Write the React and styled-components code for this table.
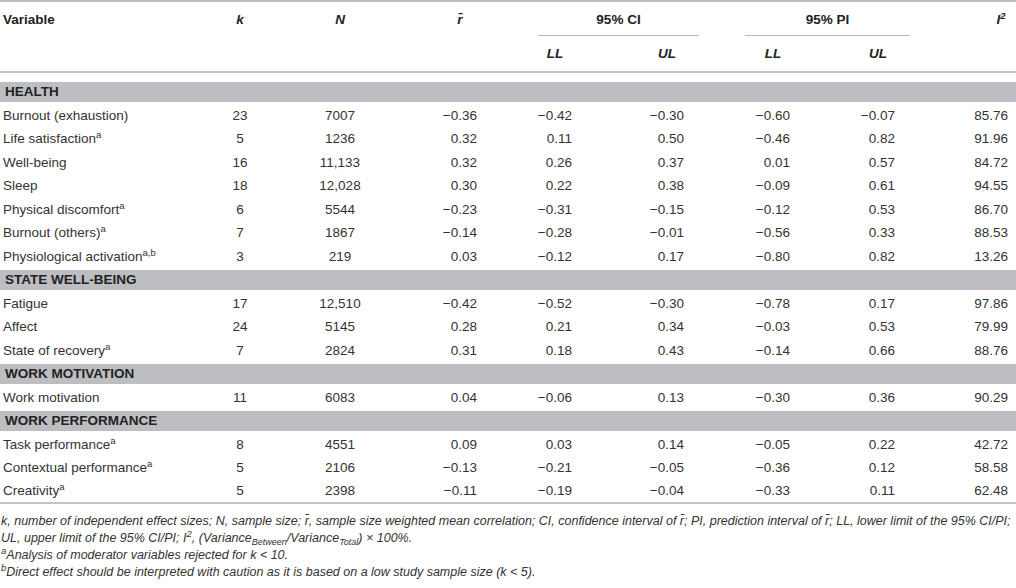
import { Fragment } from 'react';
import styled, { createGlobalStyle } from 'styled-components';

const GlobalStyle = createGlobalStyle`
  body {
    margin: 0;
    background: #fff;
    font-family: "Liberation Sans", Arial, sans-serif;
    color: #333;
  }
`;

const Page = styled.div`
  width: 1016px;
`;

const Table = styled.table`
  width: 1016px;
  table-layout: fixed;
  border-collapse: collapse;
  font-size: 13.5px;
`;

const HeadRow = styled.tr`
  border-top: ${(p) => (p.$top ? '2px solid #bcbcbc' : 'none')};
  border-bottom: ${(p) => (p.$bottom ? '2px solid #c4c4c4' : 'none')};
  height: ${(p) => p.$h}px;
`;

const Th = styled.th`
  padding: 0;
  padding-left: ${(p) => (p.$align === 'left' ? '3px' : '0')};
  padding-right: ${(p) => p.$pr || 0}px;
  text-align: ${(p) => p.$align || 'center'};
  vertical-align: ${(p) => p.$valign || 'middle'};
  font-weight: bold;
  font-size: 13.5px;
  color: #222;
`;

const HeadLabel = styled.span`
  display: inline-block;
  width: ${(p) => p.$w || 34}px;
  text-align: center;
  font-style: italic;
`;

// "95% CI" / "95% PI" with the short rule under it
const SpanLabel = styled.div`
  margin: 0 23px;
  padding: 10px 0 8px;
  border-bottom: 1px solid #b8b8b8;
  font-weight: bold;
`;

const Row = styled.tr`
  height: 23.5px;
  border-bottom: ${(p) => (p.$last ? '2px solid #c4c4c4' : 'none')};
`;

const Cell = styled.td`
  padding: 0 ${(p) => p.$pr || 0}px 0 ${(p) => p.$pl || 0}px;
  text-align: ${(p) => p.$align || 'right'};
  white-space: nowrap;
  color: #333;
`;

const BandCell = styled.td`
  padding: ${(p) => (p.$first ? '9px' : '2px')} 0 1.5px;
`;

const Band = styled.div`
  background: #bdbec1;
  height: 20px;
  line-height: 20px;
  padding-left: 5px;
  font-weight: bold;
  font-size: 13.5px;
  color: #222;
`;

const Sup = styled.sup`
  font-size: 9.5px;
  line-height: 0;
  vertical-align: 5px;
`;

const Sub = styled.sub`
  font-size: 9px;
  line-height: 0;
  vertical-align: -3px;
`;

const Notes = styled.div`
  padding: 9px 0 0 1px;
  font-style: italic;
  font-size: 12.5px;
  line-height: 17px;
  color: #333;
`;

const NoteLine = styled.div`
  white-space: nowrap;
`;

const rbar = 'r\u0304';

const sections = [
  {
    title: 'HEALTH',
    rows: [
      ['Burnout (exhaustion)', '', '23', '7007', '−0.36', '−0.42', '−0.30', '−0.60', '−0.07', '85.76'],
      ['Life satisfaction', 'a', '5', '1236', '0.32', '0.11', '0.50', '−0.46', '0.82', '91.96'],
      ['Well-being', '', '16', '11,133', '0.32', '0.26', '0.37', '0.01', '0.57', '84.72'],
      ['Sleep', '', '18', '12,028', '0.30', '0.22', '0.38', '−0.09', '0.61', '94.55'],
      ['Physical discomfort', 'a', '6', '5544', '−0.23', '−0.31', '−0.15', '−0.12', '0.53', '86.70'],
      ['Burnout (others)', 'a', '7', '1867', '−0.14', '−0.28', '−0.01', '−0.56', '0.33', '88.53'],
      ['Physiological activation', 'a,b', '3', '219', '0.03', '−0.12', '0.17', '−0.80', '0.82', '13.26'],
    ],
  },
  {
    title: 'STATE WELL-BEING',
    rows: [
      ['Fatigue', '', '17', '12,510', '−0.42', '−0.52', '−0.30', '−0.78', '0.17', '97.86'],
      ['Affect', '', '24', '5145', '0.28', '0.21', '0.34', '−0.03', '0.53', '79.99'],
      ['State of recovery', 'a', '7', '2824', '0.31', '0.18', '0.43', '−0.14', '0.66', '88.76'],
    ],
  },
  {
    title: 'WORK MOTIVATION',
    rows: [['Work motivation', '', '11', '6083', '0.04', '−0.06', '0.13', '−0.30', '0.36', '90.29']],
  },
  {
    title: 'WORK PERFORMANCE',
    rows: [
      ['Task performance', 'a', '8', '4551', '0.09', '0.03', '0.14', '−0.05', '0.22', '42.72'],
      ['Contextual performance', 'a', '5', '2106', '−0.13', '−0.21', '−0.05', '−0.36', '0.12', '58.58'],
      ['Creativity', 'a', '5', '2398', '−0.11', '−0.19', '−0.04', '−0.33', '0.11', '62.48'],
    ],
  },
];

const NUM_PAD = 38;

function DataRow({ row, last }) {
  const [name, sup, k, n, r, ciL, ciU, piL, piU, i2] = row;
  return (
    <Row $last={last}>
      <Cell $align="left" $pl={3}>
        {name}
        {sup && <Sup>{sup}</Sup>}
      </Cell>
      <Cell $align="center">{k}</Cell>
      <Cell $align="center">{n}</Cell>
      <Cell $pr={NUM_PAD}>{r}</Cell>
      <Cell $pr={NUM_PAD}>{ciL}</Cell>
      <Cell $pr={NUM_PAD}>{ciU}</Cell>
      <Cell $pr={NUM_PAD}>{piL}</Cell>
      <Cell $pr={NUM_PAD}>{piU}</Cell>
      <Cell $pr={8}>{i2}</Cell>
    </Row>
  );
}

export default function App() {
  return (
    <Page>
      <GlobalStyle />
      <Table>
        <colgroup>
          <col style={{ width: 190 }} />
          <col style={{ width: 100 }} />
          <col style={{ width: 100 }} />
          <col style={{ width: 125 }} />
          <col style={{ width: 95 }} />
          <col style={{ width: 112 }} />
          <col style={{ width: 106 }} />
          <col style={{ width: 105 }} />
          <col style={{ width: 83 }} />
        </colgroup>
        <thead>
          <HeadRow $top $h={33}>
            <Th $align="left">Variable</Th>
            <Th><HeadLabel>k</HeadLabel></Th>
            <Th><HeadLabel>N</HeadLabel></Th>
            <Th $align="right" $pr={NUM_PAD}><HeadLabel>{rbar}</HeadLabel></Th>
            <Th colSpan={2} $valign="bottom"><SpanLabel>95% CI</SpanLabel></Th>
            <Th colSpan={2} $valign="bottom"><SpanLabel>95% PI</SpanLabel></Th>
            <Th $align="right" $pr={8}>
              <HeadLabel $w={14}>I<Sup>2</Sup></HeadLabel>
            </Th>
          </HeadRow>
          <HeadRow $bottom $h={36}>
            <Th />
            <Th />
            <Th />
            <Th />
            <Th $align="right" $pr={NUM_PAD}><HeadLabel>LL</HeadLabel></Th>
            <Th $align="right" $pr={NUM_PAD}><HeadLabel>UL</HeadLabel></Th>
            <Th $align="right" $pr={NUM_PAD}><HeadLabel>LL</HeadLabel></Th>
            <Th $align="right" $pr={NUM_PAD}><HeadLabel>UL</HeadLabel></Th>
            <Th />
          </HeadRow>
        </thead>
        <tbody>
          {sections.map((s, si) => (
            <Fragment key={s.title}>
              <tr>
                <BandCell colSpan={9} $first={si === 0}>
                  <Band>{s.title}</Band>
                </BandCell>
              </tr>
              {s.rows.map((row, ri) => (
                <DataRow
                  key={row[0]}
                  row={row}
                  last={si === sections.length - 1 && ri === s.rows.length - 1}
                />
              ))}
            </Fragment>
          ))}
        </tbody>
      </Table>
      <Notes>
        <NoteLine>
          k, number of independent effect sizes; N, sample size; {rbar}, sample size weighted mean correlation; CI,
          confidence interval of {rbar}; PI, prediction interval of {rbar}; LL, lower limit of the 95% CI/PI;
        </NoteLine>
        <NoteLine>
          UL, upper limit of the 95% CI/PI; I<Sup>2</Sup>, (Variance<Sub>Between</Sub>/Variance<Sub>Total</Sub>) ×
          100%.
        </NoteLine>
        <NoteLine>
          <Sup>a</Sup>Analysis of moderator variables rejected for k &lt; 10.
        </NoteLine>
        <NoteLine>
          <Sup>b</Sup>Direct effect should be interpreted with caution as it is based on a low study sample size (k
          &lt; 5).
        </NoteLine>
      </Notes>
    </Page>
  );
}
